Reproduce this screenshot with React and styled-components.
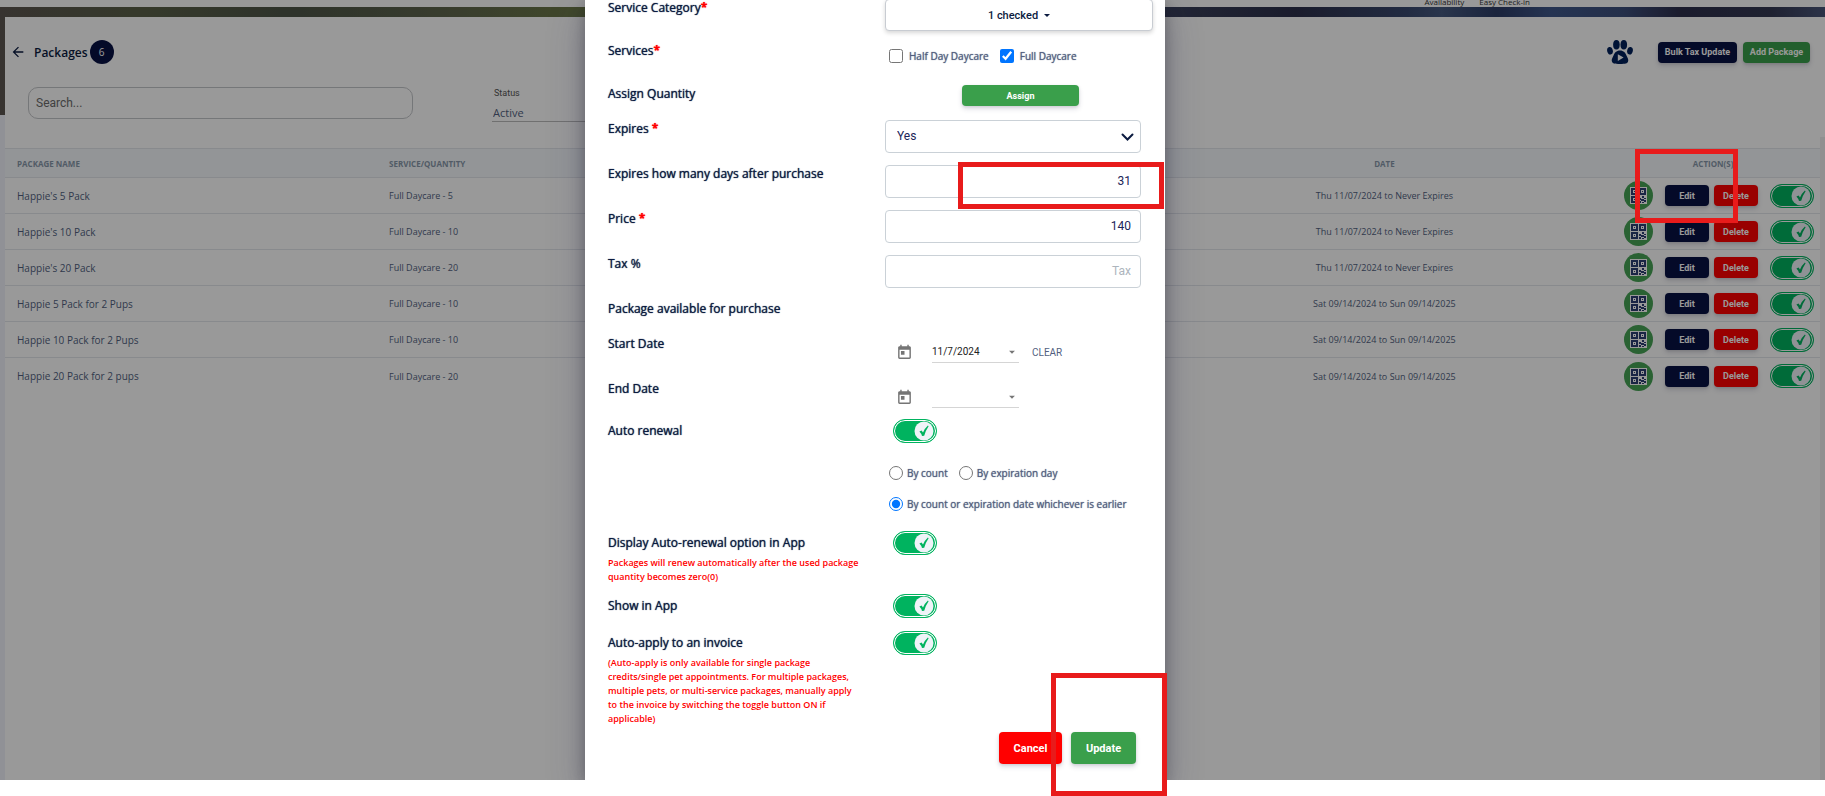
import { useState } from "react";
import styled, { createGlobalStyle, css } from "styled-components";
import { MdArrowBack, MdArrowDropDown, MdToday } from "react-icons/md";

const GlobalStyle = createGlobalStyle`
  :root {
    --navy: #081144;
    --ink: #0b1b40;
    --slate: #525f7f;
    --green: #3a9f4b;
    --switch: #00b35f;
    --red: #ff0000;
    --mark: #e81b1b;
  }

  *, *::before, *::after {
    box-sizing: border-box;
  }

  body {
    margin: 0;
    background: #fff;
    font-family: "Open Sans", sans-serif;
    overflow: hidden;
  }

  button, input, select {
    font-family: Roboto, sans-serif;
  }
`;

const Screen = styled.div`
  position: relative;
  height: 100vh;
`;

const Page = styled.div`
  position: relative;
  height: calc(100vh - 16px);
  display: flex;
  flex-direction: column;
  overflow: hidden;
  background: #f0f2fa;
`;

const TopNav = styled.nav`
  display: flex;
  justify-content: flex-end;
  align-items: flex-end;
  gap: 15px;
  height: 7px;
  padding-right: 295px;
  background: #fff;

  a {
    color: #333;
    font-size: 8px;
    line-height: 10px;
    text-decoration: none;
  }
`;

const Banner = styled.div`
  height: 108px;
  margin-bottom: -98px;
  background: linear-gradient(
    90deg,
    #5c5650 0,
    #5a6048 8%,
    #4d5548 16%,
    #5d644c 24%,
    #6d7a48 32%,
    #3a405a 64%,
    #2c2f4a 71%,
    #39486e 77%,
    #465a80 79%,
    #2c3c66 82%,
    #40588a 85%,
    #3d4f7c 89%,
    #2d2f4c 92%,
    #343852 97%,
    #4a567a 100%
  );
`;

const Card = styled.main`
  position: relative;
  flex: 1;
  display: flex;
  flex-direction: column;
  margin-left: 5px;
  background: #fff;
`;

const CardHeader = styled.header`
  display: flex;
  justify-content: space-between;
  align-items: center;
  height: 70px;
  padding: 0 15px 0 5px;
`;

const Title = styled.div`
  display: flex;
  align-items: center;
  color: var(--ink);

  svg {
    width: 16px;
    height: 16px;
    margin-right: 8px;
  }

  h1 {
    margin: 0;
    font-size: 12px;
    font-weight: 600;
  }
`;

const Badge = styled.span`
  display: grid;
  place-items: center;
  width: 24px;
  height: 24px;
  margin-left: 2px;
  border-radius: 50%;
  background: var(--navy);
  color: #fff;
  font-size: 10px;
`;

const HeaderActions = styled.div`
  display: flex;
  align-items: center;
  gap: 6px;

  svg {
    width: 26px;
    height: 24px;
    margin-right: 19px;
  }
`;

const colors = {
  navy: "var(--navy)",
  green: "var(--green)",
  red: "var(--red)",
};

const Button = styled.button`
  height: ${({ $large }) => ($large ? 32 : 21)}px;
  min-width: ${({ $width }) => $width || 44}px;
  padding: 0 6px;
  border: 0;
  border-radius: 4px;
  background: ${({ $color }) => colors[$color]};
  color: #fff;
  font-size: ${({ $large }) => ($large ? 11 : 9)}px;
  font-weight: 700;
  white-space: nowrap;
  box-shadow: 0 3px 5px rgba(50, 50, 93, 0.16), 0 1px 3px rgba(0, 0, 0, 0.1);
  cursor: pointer;
`;

const Filters = styled.div`
  display: flex;
  align-items: flex-start;
  gap: 79px;
  height: 50px;
  padding-left: 23px;
`;

const Search = styled.input`
  width: 385px;
  height: 32px;
  padding: 0 7px;
  border: 1px solid #c4c6ca;
  border-radius: 10px;
  background: #fff;
  color: #333;
  font-size: 12px;

  &::placeholder {
    color: #6c6c6c;
    opacity: 1;
  }
`;

const Status = styled.div`
  display: flex;
  flex-direction: column;
  width: 240px;
  color: #555;
  font-family: Roboto, sans-serif;
  font-size: 9px;
  line-height: 12px;

  label {
    padding-left: 2px;
  }

  select {
    height: 23px;
    padding: 5px 0 0 1px;
    border: 0;
    border-bottom: 1px solid #bbb;
    appearance: none;
    background: none;
    color: var(--slate);
    font-family: "Open Sans", sans-serif;
    font-size: 11px;
  }
`;

const TableArea = styled.div`
  flex: 1;
  padding-top: 11px;
  border-right: 5px solid #f0f0f0;
`;

const Table = styled.table`
  width: 100%;
  table-layout: fixed;
  border-collapse: separate;
  border-spacing: 0;
  color: var(--slate);

  th {
    height: 30px;
    padding: 0 12px;
    border-top: 1px solid #e3e7eb;
    border-bottom: 1px solid #e3e7eb;
    background: #f6f9fc;
    color: #8898aa;
    font-size: 8px;
    font-weight: 700;
    text-align: left;
  }

  td {
    height: 36px;
    padding: 0 12px;
    border-bottom: 1px solid #e3e7eb;
    font-size: 9px;
  }

  td:first-child {
    font-size: 10px;
  }

  tr:last-child td {
    border-bottom: 0;
  }

  th:nth-child(n + 3),
  td:nth-child(3) {
    text-align: center;
  }

  th:last-child {
    padding-left: 16px;
  }

  td:last-child {
    padding: 0 6px 0 0;
  }
`;

const RowActions = styled.div`
  display: flex;
  justify-content: flex-end;
  align-items: center;
  gap: 5px;
`;

const QrButton = styled.button`
  display: grid;
  place-items: center;
  width: 29px;
  height: 29px;
  margin-right: 7px;
  padding: 0;
  border: 0;
  border-radius: 50%;
  background: #46a355;
  cursor: pointer;
`;

const SwitchBox = styled.span`
  position: relative;
  display: inline-flex;
  margin-left: ${({ $spaced }) => ($spaced ? 7 : 0)}px;

  input {
    width: 44px;
    height: 24px;
    margin: 0;
    border: 1px solid var(--switch);
    border-radius: 12px;
    appearance: none;
    background: var(--switch);
    box-shadow: inset 0 0 0 1px #fff;
    cursor: pointer;
  }

  svg {
    position: absolute;
    top: 2px;
    right: 3px;
    width: 20px;
    height: 20px;
    pointer-events: none;
  }
`;

const Overlay = styled.div`
  position: absolute;
  inset: 0 0 16px;
  display: flex;
  justify-content: center;
  padding-right: 75px;
  overflow: hidden;
  background: rgba(0, 0, 0, 0.4);
`;

const Modal = styled.form`
  width: 580px;
  height: max-content;
  min-height: calc(100% + 1px);
  margin-top: -1px;
  padding: 0 24px 16px 23px;
  background: #fff;
  box-shadow: 0 15px 35px rgba(50, 50, 93, 0.3), 0 5px 15px rgba(0, 0, 0, 0.3);
`;

const Field = styled.div`
  display: grid;
  grid-template-columns: 277px 1fr;
  align-items: start;
  min-height: ${({ $height }) => $height || 45}px;
`;

// regular weight thickened by its own shadow
const heavier = css`
  font-weight: 400;
  text-shadow: 0 0 1px currentColor;
`;

const labelText = css`
  ${heavier}
  color: var(--ink);
  font-size: 12px;
  line-height: 16px;
  padding-top: 1px;

  b {
    color: var(--red);
  }
`;

const Label = styled.label`
  ${labelText}
`;

const GroupLabel = styled.span`
  ${labelText}
`;

const SwitchField = styled(Field)`
  align-items: center;
  min-height: 24px;
  margin-bottom: ${({ $after }) => $after || 0}px;

  label {
    padding-top: 0;
  }
`;

const Dropdown = styled.button`
  width: 268px;
  height: 32px;
  border: 1px solid #c8ccd2;
  border-radius: 4px;
  background: #fff;
  color: var(--ink);
  font-size: 11px;
  font-weight: 500;
  box-shadow: 0 2px 4px rgba(0, 0, 0, 0.16);
  cursor: pointer;

  &::after {
    content: "";
    display: inline-block;
    margin-left: 6px;
    vertical-align: 2px;
    border: 3px solid transparent;
    border-top-color: currentColor;
    border-bottom: 0;
  }
`;

const inputStyle = css`
  width: 256px;
  height: 33px;
  padding: 0 9px 2px;
  border: 1px solid #cad1d7;
  border-radius: 4px;
  background: #fff;
  color: #1b2559;
  font-size: 12px;
`;

const Input = styled.input`
  ${inputStyle}
  text-align: right;

  &::placeholder {
    color: #adb5bd;
    opacity: 1;
  }
`;

const SelectBox = styled.span`
  position: relative;
  width: 256px;

  select {
    ${inputStyle}
    padding: 0 11px 2px;
    appearance: none;
  }

  svg {
    position: absolute;
    top: 13px;
    right: 7px;
    pointer-events: none;
  }
`;

const Choices = styled.div`
  display: flex;
  flex-wrap: wrap;
  gap: 11px;
  row-gap: 15px;
  padding: ${({ $top }) => $top || 0}px 0 0 4px;
`;

const Choice = styled.label`
  ${heavier}
  display: inline-flex;
  align-items: center;
  gap: ${({ $gap }) => $gap || 4}px;
  color: var(--slate);
  font-size: 10px;
  line-height: 16px;

  input {
    width: 14px;
    height: 14px;
    margin: 0;
    accent-color: #0075ff;
  }
`;

const AssignRow = styled.div`
  display: flex;
  padding-left: 77px;
`;

const DateField = styled.div`
  display: flex;
  align-items: center;
  padding: 6px 0 0 11px;
  color: #757575;
  font-family: Roboto, sans-serif;

  > svg {
    width: 17px;
    height: 17px;
    margin-right: 19px;
  }

  span {
    display: flex;
    align-items: center;
    width: 87px;
    height: 22px;
    border-bottom: 1px solid #d5d5d5;
  }

  input {
    width: 73px;
    padding: 0;
    border: 0;
    color: #222;
    font-size: 10px;
  }

  button {
    margin-left: 13px;
    padding: 0;
    border: 0;
    background: none;
    color: var(--slate);
    font-size: 10px;
    cursor: pointer;
  }
`;

const SwitchCell = styled.div`
  display: flex;
  padding-left: 8px;
`;

const Note = styled.p`
  width: 252px;
  margin: 0 0 ${({ $after }) => $after}px;
  padding-top: 1px;
  color: var(--red);
  font-size: 9px;
  font-weight: 600;
  line-height: 14px;
`;

const Footer = styled.footer`
  display: flex;
  justify-content: flex-end;
  gap: 9px;
  padding-right: 5px;
`;

// red call-out boxes drawn over the page
const Mark = styled.div`
  position: absolute;
  border: 5px solid var(--mark);
  pointer-events: none;
`;

const PriceMark = styled(Mark)`
  top: 162px;
  left: calc(50% + 45px);
  width: 206px;
  height: 47px;
`;

const EditMark = styled(Mark)`
  top: 149px;
  right: 87px;
  width: 103px;
  height: 74px;
`;

const UpdateMark = styled(Mark)`
  bottom: 0;
  left: calc(50% + 138px);
  width: 116px;
  height: 123px;
`;

const packages = [
  { name: "Happie's 5 Pack", service: "Full Daycare - 5", date: "Thu 11/07/2024 to Never Expires" },
  { name: "Happie's 10 Pack", service: "Full Daycare - 10", date: "Thu 11/07/2024 to Never Expires" },
  { name: "Happie's 20 Pack", service: "Full Daycare - 20", date: "Thu 11/07/2024 to Never Expires" },
  { name: "Happie 5 Pack for 2 Pups", service: "Full Daycare - 10", date: "Sat 09/14/2024 to Sun 09/14/2025" },
  { name: "Happie 10 Pack for 2 Pups", service: "Full Daycare - 10", date: "Sat 09/14/2024 to Sun 09/14/2025" },
  { name: "Happie 20 Pack for 2 pups", service: "Full Daycare - 20", date: "Sat 09/14/2024 to Sun 09/14/2025" },
];

function Switch({ id, label, spaced }) {
  const [on, setOn] = useState(true);
  return (
    <SwitchBox $spaced={spaced}>
      <input
        type="checkbox"
        role="switch"
        id={id}
        aria-label={label}
        checked={on}
        onChange={() => setOn(!on)}
      />
      <svg viewBox="0 0 20 20" aria-hidden="true">
        <circle cx="10" cy="10" r="9.5" fill="#eff3f8" />
        <path d="M5.4 10.6 L7.6 9.4 L9 11.4 Q11 7.2 13.9 4.6 L14.600 5.3 Q11.600 9.6 10.200 14.800 L8 15 Q7.2 12.4 5.400 10.6Z" fill="#00b35f" />
      </svg>
    </SwitchBox>
  );
}

function Paw() {
  return (
    <svg viewBox="0 0 26 24" fill="#00205b" aria-hidden="true">
      <ellipse cx="9.4" cy="4.8" rx="3.3" ry="4.8" />
      <ellipse cx="16.8" cy="4.8" rx="3.3" ry="4.8" />
      <ellipse cx="3" cy="10.8" rx="2.8" ry="3.8" transform="rotate(-14 3 10.8)" />
      <ellipse cx="23" cy="10.8" rx="2.8" ry="3.8" transform="rotate(14 23 10.8)" />
      <path d="M13 10.6c3.6 0 5.6 2.4 6.6 5.2 1.2 2.6 2.2 4 1.4 6-.6 1.8-2.4 2.2-8 2.2s-7.4-.4-8-2.2c-.8-2 .2-3.4 1.4-6 1-2.8 3-5.2 6.6-5.2z" />
      <path d="M10.8 14.2v6.8l5.8-3.4z" fill="#fff" />
    </svg>
  );
}

function QrIcon() {
  return (
    <svg width="17" height="17" viewBox="0 0 17 17" aria-hidden="true">
      <path d="M0 0h17v17H0z" fill="#fff" />
      <g fill="none" stroke="#2c3f73" strokeWidth="2">
        <path d="M2 2h5v5H2zM10 2h5v5h-5zM2 10h5v5H2z" />
      </g>
      <g fill="#2c3f73">
        <path d="M4 4h1v1H4zM12 4h1v1h-1zM4 12h1v1H4z" />
        <path d="M9 11h2v2H9zM12 9h2v2h-2zM14 11h2v1h-2zM11 12h3v2h-3zM14 13h2v2h-2zM9 14h2v2H9zM12 15h2v1h-2z" />
      </g>
    </svg>
  );
}

function DatePicker({ id, value, clearable }) {
  return (
    <DateField>
      <MdToday />
      <span>
        <input id={id} type="text" defaultValue={value} />
        <MdArrowDropDown size={14} />
      </span>
      {clearable && <button type="button">CLEAR</button>}
    </DateField>
  );
}

function PackageModal() {
  return (
    <Overlay>
      <Modal onSubmit={(e) => e.preventDefault()}>
        <Field $height={43}>
          <Label htmlFor="category">Service Category<b>*</b></Label>
          <Dropdown type="button" id="category">1 checked</Dropdown>
        </Field>
        <Field $height={43}>
          <GroupLabel>Services<b>*</b></GroupLabel>
          <Choices $top={6}>
            <Choice $gap={6}>
              <input type="checkbox" />
              Half Day Daycare
            </Choice>
            <Choice $gap={6}>
              <input type="checkbox" defaultChecked />
              Full Daycare
            </Choice>
          </Choices>
        </Field>
        <Field $height={35}>
          <GroupLabel>Assign Quantity</GroupLabel>
          <AssignRow>
            <Button type="button" $color="green" $width={117}>Assign</Button>
          </AssignRow>
        </Field>
        <Field>
          <Label htmlFor="expires">Expires <b>*</b></Label>
          <SelectBox>
            <select id="expires" defaultValue="Yes">
              <option>Yes</option>
              <option>No</option>
            </select>
            <svg width="13" height="9" viewBox="0 0 13 9" aria-hidden="true">
              <path d="M1.5 1.5 6.5 6.5 11.5 1.5" fill="none" stroke="#0b1b40" strokeWidth="2" strokeLinecap="round" />
            </svg>
          </SelectBox>
        </Field>
        <Field>
          <Label htmlFor="days">Expires how many days after purchase</Label>
          <Input id="days" defaultValue="31" />
        </Field>
        <Field>
          <Label htmlFor="price">Price <b>*</b></Label>
          <Input id="price" defaultValue="140" />
        </Field>
        <Field>
          <Label htmlFor="tax">Tax %</Label>
          <Input id="tax" placeholder="Tax" />
        </Field>
        <Field $height={35}>
          <GroupLabel>Package available for purchase</GroupLabel>
        </Field>
        <Field>
          <Label htmlFor="start">Start Date</Label>
          <DatePicker id="start" value="11/7/2024" clearable />
        </Field>
        <Field $height={39}>
          <Label htmlFor="end">End Date</Label>
          <DatePicker id="end" value="" />
        </Field>
        <SwitchField>
          <Label htmlFor="renewal">Auto renewal</Label>
          <SwitchCell><Switch id="renewal" /></SwitchCell>
        </SwitchField>
        <Field $height={88}>
          <span />
          <Choices $top={22}>
            <Choice>
              <input type="radio" name="renew" />
              By count
            </Choice>
            <Choice>
              <input type="radio" name="renew" />
              By expiration day
            </Choice>
            <Choice>
              <input type="radio" name="renew" defaultChecked />
              By count or expiration date whichever is earlier
            </Choice>
          </Choices>
        </Field>
        <SwitchField>
          <Label htmlFor="display">Display Auto-renewal option in App</Label>
          <SwitchCell><Switch id="display" /></SwitchCell>
        </SwitchField>
        <Note $after={10}>
          Packages will renew automatically after the used package quantity
          becomes zero(0)
        </Note>
        <SwitchField $after={13}>
          <Label htmlFor="show">Show in App</Label>
          <SwitchCell><Switch id="show" /></SwitchCell>
        </SwitchField>
        <SwitchField>
          <Label htmlFor="apply">Auto-apply to an invoice</Label>
          <SwitchCell><Switch id="apply" /></SwitchCell>
        </SwitchField>
        <Note $after={6}>
          (Auto-apply is only available for single package credits/single pet
          appointments. For multiple packages, multiple pets, or multi-service
          packages, manually apply to the invoice by switching the toggle button
          ON if applicable)
        </Note>
        <Footer>
          <Button type="button" $color="red" $large $width={63}>Cancel</Button>
          <Button type="submit" $color="green" $large $width={65}>Update</Button>
        </Footer>
      </Modal>
    </Overlay>
  );
}

export default function App() {
  return (
    <Screen>
      <GlobalStyle />
      <Page>
        <TopNav>
          <a href="#availability">Availability</a>
          <a href="#checkin">Easy Check-in</a>
        </TopNav>
        <Banner />
        <Card>
          <CardHeader>
            <Title>
              <MdArrowBack />
              <h1>Packages</h1>
              <Badge>6</Badge>
            </Title>
            <HeaderActions>
              <Paw />
              <Button $color="navy" $width={79}>Bulk Tax Update</Button>
              <Button $color="green" $width={67}>Add Package</Button>
            </HeaderActions>
          </CardHeader>
          <Filters>
            <Search type="search" placeholder="Search..." aria-label="Search" />
            <Status>
              <label htmlFor="status">Status</label>
              <select id="status" defaultValue="Active">
                <option>Active</option>
                <option>Inactive</option>
              </select>
            </Status>
          </Filters>
          <TableArea>
            <Table>
              <colgroup>
                <col width="20.5%" />
                <col />
                <col width="24%" />
                <col width="12%" />
              </colgroup>
              <thead>
                <tr>
                  <th>PACKAGE NAME</th>
                  <th>SERVICE/QUANTITY</th>
                  <th>DATE</th>
                  <th>ACTION(S)</th>
                </tr>
              </thead>
              <tbody>
                {packages.map((item) => (
                  <tr key={item.name}>
                    <td>{item.name}</td>
                    <td>{item.service}</td>
                    <td>{item.date}</td>
                    <td>
                      <RowActions>
                        <QrButton aria-label="QR code"><QrIcon /></QrButton>
                        <Button $color="navy">Edit</Button>
                        <Button $color="red">Delete</Button>
                        <Switch label={item.name} spaced />
                      </RowActions>
                    </td>
                  </tr>
                ))}
              </tbody>
            </Table>
          </TableArea>
        </Card>
      </Page>
      <PackageModal />
      <PriceMark />
      <EditMark />
      <UpdateMark />
    </Screen>
  );
}
